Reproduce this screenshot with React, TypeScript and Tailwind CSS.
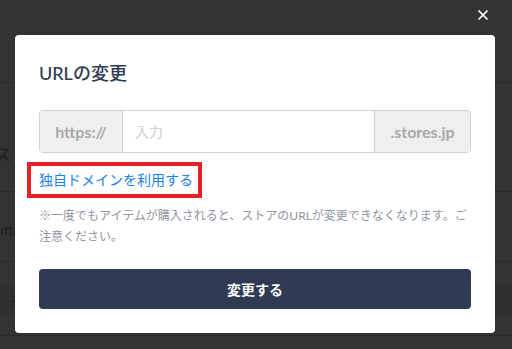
import { X } from 'lucide-react';

const font = { fontFamily: 'Lato, "Noto Sans CJK JP", sans-serif' };

export default function App() {
  return (
    <div className="relative w-[512px] h-[349px] overflow-hidden bg-[#333333]" style={font}>
      {/* page behind the overlay */}
      <div className="flex flex-col text-[#1e1e1e]">
        <div className="h-[83px] border-b border-[#2a2a2a]" />
        <div className="h-[109px] border-b border-[#2a2a2a] flex items-start pt-[60px] -ml-[6px] text-[17px] leading-[24px]">ストア</div>
        <div className="h-[70px] border-b border-[#2a2a2a] flex items-start pt-[28px] -ml-[4px] text-[14px] leading-[20px]">https://</div>
        <div className="h-[74px] border-b border-[#2a2a2a] flex items-center">
          <div className="h-[32px] w-full bg-[#303030] flex items-center pl-[10px] text-[#262626] text-[18px]">非公開</div>
        </div>
      </div>

      <button className="absolute left-[475px] top-[7px] w-[16px] h-[16px] flex items-center justify-center text-white">
        <X size={18} strokeWidth={2.6} />
      </button>

      {/* modal */}
      <div className="absolute left-[15px] top-[35px] w-[480px] bg-white rounded-[4px] px-6 pt-6 pb-6">
        <h2 className="text-[18px] leading-[28px] text-[#2f3b52] font-medium">URLの変更</h2>

        <div className="mt-[23px] flex h-[43px] rounded-[4px] border border-[#d2d2d2] overflow-hidden">
          <div className="w-[83px] bg-[#efefef] border-r border-[#d2d2d2] flex items-center justify-center text-[16px] font-bold text-[#a9a9a9]">
            https://
          </div>
          <input
            className="flex-1 min-w-0 px-3 text-[14px] outline-none placeholder:text-[#cfcfcf]"
            placeholder="入力"
          />
          <div className="w-[96px] bg-[#efefef] border-l border-[#d2d2d2] flex items-center justify-center text-[16px] font-bold text-[#a9a9a9]">
            .stores.jp
          </div>
        </div>

        <div className="relative mt-[17px] w-fit">
          <a className="block text-[14px] leading-[20px] text-[#1b7fe8]">独自ドメインを利用する</a>
          <div className="absolute -left-[12px] -top-[8px] w-[175px] h-[36px] border-4 border-[#e8202a]" />
        </div>

        <p className="mt-[15px] text-[12px] leading-[21px] text-[#8f96a1]">
          ※一度でもアイテムが購入されると、ストアのURLが変更できなくなります。ご注意ください。
        </p>

        <button className="mt-[22px] w-full h-[40px] rounded-[4px] bg-[#2e3b52] text-white text-[14px] font-bold">
          変更する
        </button>
      </div>
    </div>
  );
}
